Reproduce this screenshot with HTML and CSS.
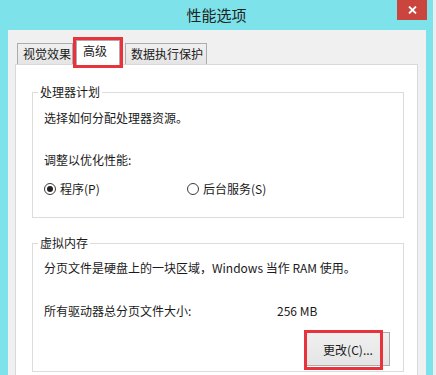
FILE: index.html
```html
<!DOCTYPE html>
<html lang="zh-CN">
<head>
  <meta charset="UTF-8">
  <title>性能选项</title>
  <link rel="stylesheet" href="styles.css">
</head>
<body>

  <div class="ventana">
    <!-- Barra de título -->
    <div class="titulo">
      <span class="titulo-texto">性能选项</span>
      <button class="cerrar" title="关闭">
        <svg width="9" height="8" viewBox="0 0 9 8">
          <path d="M1 0.5 L8 7.5 M8 0.5 L1 7.5" stroke="#fff" stroke-width="1.8" fill="none"/>
        </svg>
      </button>
    </div>

    <div class="cliente">
      <!-- Pestañas -->
      <div class="pestanas">
        <div class="pestana p1">视觉效果</div>
        <div class="pestana activa">高级</div>
        <div class="pestana p3">数据执行保护</div>
      </div>

      <div class="panel">
        <fieldset class="grupo">
          <legend>处理器计划</legend>
          <div class="grupo-cuerpo">
            <p class="linea">选择如何分配处理器资源。</p>
            <p class="linea sep">调整以优化性能:</p>
            <div class="radios">
              <label class="radio"><span class="circulo marcado"></span>程序(P)</label>
              <label class="radio"><span class="circulo"></span>后台服务(S)</label>
            </div>
          </div>
        </fieldset>

        <fieldset class="grupo g2">
          <legend>虚拟内存</legend>
          <div class="grupo-cuerpo c2">
            <p class="linea">分页文件是硬盘上的一块区域，Windows 当作 RAM 使用。</p>
            <div class="linea tamano">
              <span>所有驱动器总分页文件大小:</span>
              <span>256 MB</span>
            </div>
            <div class="acciones">
              <div class="boton-caja">
                <button class="boton">更改(C)...</button>
                <span class="marca"></span>
              </div>
            </div>
          </div>
        </fieldset>
      </div>
    </div>
  </div>
  <div class="borde"></div>

</body>
</html>
```

FILE: styles.css
```css
body {
  margin: 0;
  width: 436px;
  height: 375px;
  overflow: hidden;
  display: flex;
  font-family: "Noto Sans CJK SC", "Noto Sans", sans-serif;
  font-size: 12px;
  color: #1a1a1a;
  background-color: #7de2e9;
}
.ventana {
  width: 433px;
  background-color: #7de2e9;
}
.borde {
  width: 3px;
  background-color: #e9eeee;
}

/* Barra de título */
.titulo {
  height: 30px;
  display: grid;
  grid-template-columns: 1fr auto 1fr;
  align-items: start;
}
.titulo-texto {
  grid-column: 2;
  font-size: 15px;
  line-height: 30px;
  color: #222;
}
.cerrar {
  grid-column: 3;
  justify-self: end;
  margin-right: 6px;
  width: 30px;
  height: 20px;
  border: none;
  padding: 0;
  background-color: #c9453e;
  display: flex;
  align-items: center;
  justify-content: center;
}

.cliente {
  margin: 0 7px 0 8px;
  height: 345px;
  background-color: #f0f0f0;
  padding: 10px 8px 0 7px;
  box-sizing: border-box;
}

/* Pestañas */
.pestanas {
  display: flex;
  align-items: flex-end;
  padding-left: 2px;
}
.pestana {
  box-sizing: border-box;
  height: 21px;
  line-height: 19px;
  border: 1px solid #acacac;
  border-bottom: none;
  background: linear-gradient(#f0f0f0, #e5e5e5);
  padding-left: 5px;
  white-space: nowrap;
}
.p1 {
  width: 56px;
}
.p3 {
  width: 82px;
  margin-left: 5px;
}
.activa {
  position: relative;
  z-index: 1;
  width: 44px;
  height: 25px;
  margin-left: 3px;
  margin-bottom: -1px;
  padding-left: 6px;
  padding-bottom: 4px;
  line-height: 20px;
  background: white;
  outline: 3px solid #e8323c;
}

.panel {
  background-color: white;
  border: 1px solid #d9d9d9;
  padding: 19px 13px 20px 16px;
}

/* Grupos */
.grupo {
  margin: 0;
  padding: 0;
  border: 1px solid #dcdcdc;
}
.grupo legend {
  margin-left: 5px;
  padding: 0 2px;
  line-height: 16px;
}
.g2 {
  margin-top: 17px;
}
.grupo-cuerpo {
  padding: 10px 12px 20px 11px;
}
.c2 {
  padding-top: 9px;
  padding-bottom: 5px;
}
.linea {
  margin: 0;
  line-height: 16px;
}
.sep {
  margin-top: 26px;
}
.radios {
  margin-top: 13px;
  display: grid;
  grid-template-columns: 143px auto;
  line-height: 16px;
}
.radio {
  display: flex;
  align-items: center;
  gap: 4px;
}
.circulo {
  width: 12px;
  height: 12px;
  box-sizing: border-box;
  border: 1px solid #3c3c3c;
  border-radius: 50%;
  background: white;
  display: flex;
  align-items: center;
  justify-content: center;
}
.marcado::after {
  content: "";
  width: 6px;
  height: 6px;
  border-radius: 50%;
  background: #222;
}

.tamano {
  margin-top: 27px;
  display: grid;
  grid-template-columns: 233px auto;
}
.acciones {
  display: flex;
  justify-content: flex-end;
  margin-top: 13px;
  padding-right: 1px;
}
.boton-caja {
  position: relative;
}
.boton {
  width: 84px;
  height: 34px;
  font-family: inherit;
  font-size: 12px;
  color: #1a1a1a;
  border: 1px solid #acacac;
  background: linear-gradient(#f0f0f0, #e5e5e5);
  padding: 0;
}
.marca {
  position: absolute;
  left: -2px;
  top: -2px;
  width: 79px;
  height: 40px;
  box-sizing: border-box;
  border: 3px solid #e8323c;
}
```
